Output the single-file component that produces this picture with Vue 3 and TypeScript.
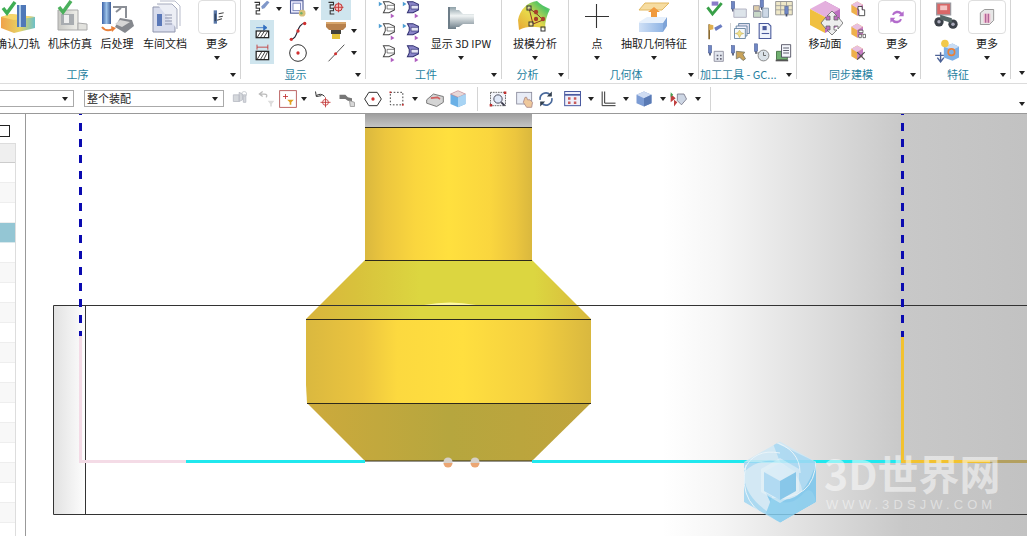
<script setup lang="ts">
import { h } from 'vue'
import type { FunctionalComponent } from 'vue'

const tool = (x: number, y: number, c = '#6f86c4') =>
  `<rect x="${x}" y="${y}" width="4" height="9" fill="${c}" stroke="#47588f" stroke-width=".6"/><path d="M${x + 1} ${y + 9}h2v3h-2z" fill="#46506e"/>`
const pointer = (fill: string, stroke: string, inner: string) =>
  `<path d="M7 4h6l6 3v6l-6 3H7l2-4V8z" fill="${fill}" stroke="${stroke}" stroke-width="1.100"/><path d="M11 8h8v4h-8z" fill="${inner}" stroke="${stroke}" stroke-width=".7"/>`
const tri = '<path d="M2 4l4 2.500-4 2.500z" fill="#4f9ed2"/><path d="M15 17l4 2.500-4 2.500z" fill="#b05fc0"/>'
const triB = '<path d="M15 17l4 2.500-4 2.500z" fill="#b05fc0"/>'

const icons: Record<string, string> = {
  verify: '<defs><linearGradient id="vf" x1="0" x2="1"><stop offset="0" stop-color="#f0a24a"/><stop offset=".55" stop-color="#e6d264"/><stop offset="1" stop-color="#6cc0c8"/></linearGradient></defs><path d="M1 17l10-3 24 3v11l-21 5L1 28z" fill="url(#vf)"/><path d="M1 17l10-3 24 3-21 3z" fill="#f6d66c"/><path d="M17 5h9v22h-9z" fill="#4f78b8"/><path d="M19 5h2v22h-2z" fill="#a8c8e8"/><path d="M3 8l4 5 8-11" fill="none" stroke="#3fae55" stroke-width="3.500"/>',
  machine: '<defs><linearGradient id="mc" x1="0" x2="1"><stop offset="0" stop-color="#c8c8c4"/><stop offset="1" stop-color="#efefea"/></linearGradient></defs><path d="M6 10h20v20H6z" fill="url(#mc)" stroke="#a9a9a9"/><path d="M9 14h13v11H9z" fill="#a8acb0"/><path d="M12 15h5v8h-5z" fill="#eee"/><path d="M26 23l9 1v6H26z" fill="#e2e2de" stroke="#aaa"/><path d="M7 7l4 5 8-11" fill="none" stroke="#4bb05c" stroke-width="3.500"/>',
  post: '<defs><linearGradient id="pt" x1="0" x2="1"><stop offset="0" stop-color="#3d63a8"/><stop offset=".5" stop-color="#9cc2e8"/><stop offset="1" stop-color="#3f5e98"/></linearGradient></defs><path d="M3 2h9v22H3z" fill="url(#pt)"/><path d="M14 7h14M27 7v11M22 8l-5 4" stroke="#8b8f96" stroke-width="2" fill="none"/><path d="M21 18l12 2 2 6-9 7-10-6z" fill="#85888e"/><path d="M21 20l10 2-8 5-7-3z" fill="#d6d6d6"/><path d="M3 27c3 4 7 4 11 2" stroke="#e8803a" stroke-width="2" fill="none"/><path d="M12 26l5 2-4 4z" fill="#e8803a"/>',
  docs: '<path d="M6 7h17l5 5v20H6z" fill="#d8dcec" stroke="#8f95ad"/><path d="M10 4h15l5 5v20" fill="#eceef5" stroke="#a5aabd"/><path d="M13 1h15l5 5v20" fill="none" stroke="#b7bbcb"/><path d="M10 14h5v12h-5z" fill="#5a78b8"/><path d="M18 15h7M18 18h7M18 21h7M18 24h7" stroke="#8f95ad"/>',
  moreTool: '<path d="M8 4h4v16H8z" fill="#5a78a8"/><path d="M9 8h2v9H9z" fill="#33445f"/><path d="M14 8l6-1M14 12l5-1M12 16l6-2" stroke="#444" stroke-width="1.300"/>',
  ipw: '<defs><linearGradient id="ip" x1="0" y1="0" x2="0" y2="1"><stop offset="0" stop-color="#8ea0a8"/><stop offset=".4" stop-color="#f0f4f4"/><stop offset="1" stop-color="#6d7d88"/></linearGradient></defs><path d="M6 7h7v3h3l4 4h11v10H20l-4 3h-3v2H6z" fill="url(#ip)"/><path d="M6 7v22" stroke="#6d7d88" stroke-width="2"/>',
  draft: '<defs><linearGradient id="dr" x1="0" y1="1" x2="1" y2="0"><stop offset="0" stop-color="#e7a534"/><stop offset=".45" stop-color="#e8d84a"/><stop offset=".8" stop-color="#4fc464"/><stop offset="1" stop-color="#9fe0a0"/></linearGradient></defs><path d="M1 20C3 10 10 2 20 1c3 3 8 6 13 8-3 6-5 12-5 20-9-3-18-3-26 1z" fill="url(#dr)"/><path d="M12 8l4 16 10-4-5-5-9-7z" fill="none" stroke="#8b3a2a"/><rect x="10" y="6" width="4" height="4" fill="#fff6" stroke="#333"/><rect x="12" y="22" width="4" height="4" fill="#fff6" stroke="#333"/><rect x="24" y="27" width="4" height="4" fill="#fff6" stroke="#333"/><circle cx="19" cy="12" r="2.200" fill="#a8402a"/><circle cx="26" cy="19" r="2.200" fill="#a8402a"/><circle cx="19" cy="19" r="2.200" fill="#a8402a"/>',
  plus: '<path d="M17.500 4v24M6 16.500h24" stroke="#333" stroke-width="1.100"/>',
  extract: '<defs><linearGradient id="ex" x1="0" x2="1"><stop offset="0" stop-color="#cfe0f6"/><stop offset="1" stop-color="#8fb4e4"/></linearGradient></defs><path d="M9 3h24l-7 7H3z" fill="#f6dca0" stroke="#e2b860"/><path d="M15 18v-6h-3l6-5 6 5h-3v6z" fill="#f09a3e"/><path d="M3 22l8-5h19l-3 6H3z" fill="#e6f0fc"/><path d="M3 23h24v9H3z" fill="url(#ex)"/><path d="M27 23l4-6v9l-4 6z" fill="#7ea4d8"/>',
  move: '<path d="M18 1l15 8v16l-15 8z" fill="#bd6ec0"/><path d="M18 1L3 9l15 8 15-8z" fill="#e4b0de"/><path d="M3 9l15 8v16L3 25z" fill="#f0c040"/><path d="M21 13v4h4v-3l5 6-5 6v-3h-4v4h3l-5 5-5-5h3v-4h-4v3l-5-6 5-6v3h4v-4h-3l5-5 5 5z" fill="#ededed" stroke="#666" stroke-width=".8" transform="translate(6 3)"/>',
  cubeA: '<path d="M4 7l7-4 7 4v9l-7 4-7-4z" fill="#eeb04c"/><path d="M11 3l7 4-7 4-7-4z" fill="#e8c0e0"/><path d="M11 11l7-4v9l-7 4z" fill="#c77cc4"/><path d="M12 9h5v4h3v7h-7v-7h-1z" fill="#fff" stroke="#333"/>',
  cubeB: '<path d="M4 7l7-4 7 4v9l-7 4-7-4z" fill="#eeb04c"/><path d="M11 3l7 4-7 4-7-4z" fill="#e8c0e0"/><path d="M11 11l7-4v9l-7 4z" fill="#c77cc4"/><path d="M13 11h5v3h-5zM13 16h3v4h-3zM18 16h3v4h-3z" fill="#fff" stroke="#333" stroke-width=".8"/>',
  cubeX: '<path d="M4 7l7-4 7 4v9l-7 4-7-4z" fill="#eeb04c"/><path d="M11 3l7 4-7 4-7-4z" fill="#e8c0e0"/><path d="M11 11l7-4v9l-7 4z" fill="#c77cc4"/><path d="M11 11l9 9M20 11l-9 9" stroke="#555" stroke-width="1.500"/>',
  sync: '<path d="M6 9a7 7 0 0 1 12-2l2-2v6h-6l2-2a5 5 0 0 0-8 1zM18 15a7 7 0 0 1-12 2l-2 2v-6h6l-2 2a5 5 0 0 0 8-1z" fill="#b36ccc"/>',
  bino: '<path d="M4 1h12v10H4z" fill="#d86868" stroke="#9a9aa0"/><path d="M7 3h6v4H7z" fill="#f4c4c4"/><circle cx="6" cy="17" r="4" fill="#3b4048"/><circle cx="18" cy="19" r="4" fill="#3b4048"/><circle cx="6" cy="17" r="1.500" fill="#aab"/><circle cx="18" cy="19" r="1.500" fill="#aab"/><path d="M7 11l10 3v4l-10-3z" fill="#566"/>',
  spot: '<path d="M10 9l8-3 6 3v10l-6 3-8-3z" fill="#7eb0e6"/><path d="M10 9l8 3 6-3-6-3z" fill="#c8dcf4"/><circle cx="11" cy="6" r="3.500" fill="#f2c94a"/><circle cx="17" cy="14" r="3" fill="none" stroke="#e8803a" stroke-width="1.500"/><path d="M7 14v8M4 19l3 4 3-4M2 17h8" stroke="#4c6296" stroke-width="1.300" fill="none"/>',
  box3: '<path d="M4 7l5-4h11v13l-5 5H4z" fill="#e7e7e7" stroke="#888"/><path d="M8 8h8v11H8z" fill="#efb7cc"/><path d="M10 8h1v11h-1zM13 8h1v11h-1z" fill="#8d3f80"/>',
  sel1: '<path d="M3 4h6v3H5v4h4v3H5v4h5" fill="none" stroke="#333" stroke-width="1.300"/><path d="M11 9l7-7 3 2-6 7-3 1z" fill="#7f97c9"/>',
  sel2: '<rect x="3" y="2" width="15" height="15" fill="#eef" stroke="#4d5a94" stroke-width="1.300"/><rect x="6" y="5" width="9" height="9" fill="#fff" stroke="#6d7ab4"/><circle cx="17" cy="17" r="4" fill="#d9c27a"/><circle cx="16" cy="17" r="1.500" fill="#6db06d"/>',
  sel3: '<path d="M3 4h6v3H5v4h4v3H5v4h5" fill="none" stroke="#333" stroke-width="1.300"/><circle cx="15" cy="10" r="4.500" fill="#f2bcbc" stroke="#c03030" stroke-width="1.200"/><path d="M15 4v12M9 10h12" stroke="#c03030"/>',
  hatch: '<path d="M5 8h12M14 5l4 3-4 3z" stroke="#3270c0" fill="#3270c0"/><rect x="5" y="12" width="15" height="8" fill="#fff" stroke="#222" stroke-width="1.500"/><path d="M6 20l5-8M10 20l5-8M14 20l5-8" stroke="#222"/>',
  hatch2: '<path d="M6 5h13M6 2v6M19 2v6" stroke="#c03030" fill="none"/><rect x="5" y="10" width="15" height="10" fill="#fff" stroke="#222" stroke-width="1.500"/><path d="M6 20l6-10M10 20l6-10M14 20l5-10" stroke="#222"/>',
  curve: '<path d="M3 22c10 0 6-18 18-20" fill="none" stroke="#223" stroke-width="1.300"/><circle cx="4" cy="22" r="2" fill="#d03030"/><circle cx="12" cy="12" r="2" fill="#d03030"/><circle cx="20" cy="3" r="2" fill="#d03030"/>',
  circle: '<circle cx="12" cy="12" r="10" fill="#fff" stroke="#333" stroke-width="1.200"/><circle cx="12" cy="12" r="2" fill="#d03030"/>',
  bronze: '<path d="M2 3h20v5l-3 3H5L2 8z" fill="#b8814c"/><path d="M2 3h20v2H2z" fill="#d8a66c"/><path d="M7 11h10v4H7z" fill="#42413a"/><path d="M8 15h8v5H8z" fill="#e4c23a"/>',
  line: '<path d="M3 22L22 2" stroke="#333"/><circle cx="11.500" cy="13" r="1.800" fill="#d03030"/>',
  t1: pointer('#fff', '#444', '#fff') + tri,
  t2: pointer('#8a85c8', '#2f2f70', '#e4e4f4') + tri,
  t3: pointer('#fff', '#444', '#fff') + triB,
  t4: pointer('#8a85c8', '#2f2f70', '#e4e4f4') + triB,
  chk: '<path d="M8 3h8v5H8z" fill="#8a7cc8"/><path d="M3 10l6 8L20 5" fill="none" stroke="#38a048" stroke-width="3.500"/>',
  a2: tool(4, 3) + '<path d="M7 12h15v10H7z" fill="#dde4ea" stroke="#aab"/>',
  a3: tool(11, 1) + '<path d="M3 8h7v6H3z" fill="#dca" stroke="#889"/><path d="M14 11h7v11h-7z" fill="#cdd8e6" stroke="#89a"/><path d="M3 15h9v7H3z" fill="#c8d8c8" stroke="#889"/>',
  a4: '<path d="M2 3h20v16H2z" fill="#efe8c8" stroke="#888"/><path d="M2 8h20M2 13h20M8 3v16M15 3v16" stroke="#999"/>' + tool(13, 9),
  b1: '<path d="M5 4v18" stroke="#8a6a30" stroke-width="2"/><path d="M5 4l5 1v5l-5 1z" fill="#e0b050"/><path d="M11 8l8-4 2 3-8 5z" fill="#6a7cc0"/>',
  b2: '<path d="M8 3h13v12H8z" fill="#dde" stroke="#5a7a98"/><path d="M5 6h13v12H5z" fill="#f4f4ff" stroke="#5a7a98"/><path d="M3 9h13v12H3z" fill="#f6fafc" stroke="#5a7a98"/><path d="M9 11l2 3 3 1-3 1-2 4-2-4-3-1 3-1z" fill="#efe08a" stroke="#b59a30" stroke-width=".5"/>',
  b3: '<path d="M5 3h11l3 3v15H5z" fill="#f0f4fc" stroke="#4a5a9c" stroke-width="1.300"/><path d="M9 6h5v5H9z" fill="#4a5a9c"/><path d="M8 15h9" stroke="#4a5a9c" stroke-width="1.300"/>',
  c1: tool(4, 3) + '<path d="M11 10h11v12H11z" fill="#e2e6ee" stroke="#889"/><path d="M14 14h2v2h-2zM18 14h2v2h-2zM14 18h2v2h-2zM18 18h2v2h-2z" fill="#667"/>',
  c2: tool(4, 3) + '<path d="M10 10l10 1-2 3 3 5-3 2-4-4-4 2z" fill="#c9a35a" stroke="#776"/>',
  c3: tool(4, 1) + '<path d="M5 12h8" stroke="#777"/><circle cx="15" cy="15" r="6.500" fill="#dbe2e8" stroke="#777"/><path d="M15 11v4h3" stroke="#555" fill="none"/>',
  c4: '<path d="M3 10h13v10H3z" fill="#70b070" stroke="#3a6a3a"/><path d="M9 2h11v15H9z" fill="#f4f6fc" stroke="#445"/><path d="M11 6h7M11 9h7M11 12h7" stroke="#445"/><path d="M2 20h15v2H2z" fill="#555"/>',
  gPlane: '<path d="M4 7h7v8H4zM11 4l4 2v7l-4 2zM16 7h3v9h-3z" fill="#d5d8dc" stroke="#b8bcc4"/><circle cx="17" cy="6" r="3" fill="none" stroke="#c4c8cc"/>',
  gFilter: '<path d="M4 6h6c3 0 4 2 2 4M8 3L4 6l4 3" fill="none" stroke="#bbb" stroke-width="1.500"/><path d="M14 14h8l-3 4v3h-2v-3z" fill="#ddd"/>',
  filter: '<rect x="2" y="2" width="20" height="20" fill="#fff" stroke="#b04848"/><path d="M9 6v6M6 9h6" stroke="#c03030"/><path d="M11 13h8l-3 3v3h-2v-3z" fill="#e0a020"/>',
  undoX: '<path d="M4 8a7 7 0 0 1 10 1M3 3l1 6 6-1" fill="none" stroke="#333" stroke-width="1.200"/><path d="M15 10v12M9 16h12" stroke="#c03030"/><circle cx="15" cy="16" r="3.500" fill="none" stroke="#c03030"/>',
  wrench: '<path d="M3 7h7l3 3 5 1v4l-5-1-3-2H3z" fill="#777"/><path d="M15 14l6 2v5h-5z" fill="#d8d8d8" stroke="#999"/>',
  hex: '<path d="M7 4h10l5 8-5 8H7l-5-8z" fill="#fff" stroke="#333" stroke-width="1.200"/><circle cx="12" cy="12" r="2" fill="#d03030"/>',
  dash: '<rect x="4" y="4" width="15" height="15" fill="none" stroke="#222" stroke-dasharray="2 2"/><rect x="3" y="3" width="2" height="2" fill="#c03030"/><rect x="18" y="18" width="2" height="2" fill="#c03030"/>',
  eraser: '<path d="M2 13l8-7 12 3v7l-8 5-12-4z" fill="#d4d4d4" stroke="#666"/><path d="M7 11l8-1 3 2" stroke="#d06060" stroke-width="2" fill="none"/>',
  cube: '<path d="M12 2l9 4v12l-9 4-9-4V6z" fill="#6ab0e6"/><path d="M12 2l9 4-9 4-9-4z" fill="#e8d8d8" stroke="#d06060" stroke-width=".5"/><path d="M12 10l9-4v12l-9 4z" fill="#a8d4f4"/>',
  zoomBox: '<rect x="3" y="4" width="18" height="16" fill="#f2f4fa" stroke="#555" stroke-dasharray="2 1"/><circle cx="12" cy="12" r="5" fill="#dfe8f8" stroke="#334"/><path d="M16 16l4 4" stroke="#334" stroke-width="2"/><rect x="2" y="18" width="3" height="3" fill="#c03030"/><rect x="19" y="3" width="3" height="3" fill="#c03030"/>',
  hand: '<rect x="2" y="4" width="18" height="14" fill="#e8ecf6" stroke="#889"/><path d="M12 10l2 0 1 3 3 0 3 3-1 6h-6l-4-6z" fill="#eec89c" stroke="#a88"/>',
  rotate: '<path d="M5 13a7 7 0 0 1 12-6M19 11a7 7 0 0 1-12 6" fill="none" stroke="#4a6a9c" stroke-width="2"/><path d="M19 3v6h-6zM5 21v-6h6z" fill="#33404f"/>',
  views: '<rect x="2" y="3" width="19" height="17" fill="#efeffa" stroke="#4a5aa0" stroke-width="1.200"/><path d="M2 7h19" stroke="#4a5aa0" stroke-width="2"/><path d="M6 10h3v3H6zM13 10h3v3h-3zM6 15h3v3H6zM13 15h3v3h-3z" fill="#c85a5a"/>',
  wcs: '<path d="M5 3v17h16M8 3v14h13" fill="none" stroke="#333" stroke-width="1.200"/>',
  box: '<path d="M12 3l9 4v10l-9 4-9-4V7z" fill="#7c9cd4"/><path d="M12 3l9 4-9 4-9-4z" fill="#cfdcf2"/><path d="M12 11l9-4v10l-9 4z" fill="#5a7ab4"/>',
  mark: '<path d="M10 6l8 0 3 6-6 7-5-5z" fill="#cdd6e4" stroke="#778"/><path d="M2 6l6 5-6 5zM6 13l4 3-4 5z" fill="#c04040"/><path d="M2 4l3 3-3 3z" fill="#40a050"/>'
}

const Ic: FunctionalComponent<{ n: string; s?: number }> = (p) => {
  const s = p.s ?? 20
  const v = s >= 30 ? s : 24
  return h('svg', { class: 'ic', width: s, height: s, viewBox: `0 0 ${v} ${v}`, innerHTML: icons[p.n] })
}

interface TbItem { n: string; c: number; arrow?: boolean; sep?: boolean }
const barItems: TbItem[] = [
  { n: 'gPlane', c: 240 }, { n: 'gFilter', c: 266 }, { n: 'filter', c: 288 }, { n: '', c: 304, arrow: true },
  { n: 'undoX', c: 324 }, { n: 'wrench', c: 348 }, { n: 'hex', c: 374 }, { n: 'dash', c: 398 }, { n: '', c: 416, arrow: true },
  { n: 'eraser', c: 437 }, { n: 'cube', c: 460 }, { n: '', c: 479, sep: true },
  { n: 'zoomBox', c: 500 }, { n: 'hand', c: 527 }, { n: 'rotate', c: 548 }, { n: 'views', c: 575 }, { n: '', c: 593, arrow: true },
  { n: 'wcs', c: 611 }, { n: '', c: 629, arrow: true }, { n: 'box', c: 648 }, { n: '', c: 667, arrow: true },
  { n: 'mark', c: 684 }, { n: '', c: 703, arrow: true }, { n: '', c: 716, sep: true }
]
const itemWidth = (i: TbItem) => (i.arrow ? 7 : i.sep ? 1 : 20)
const barStart = 224
const barOffset = (idx: number) => {
  const it = barItems[idx]
  const prev = idx === 0 ? barStart : barItems[idx - 1].c + itemWidth(barItems[idx - 1]) / 2
  return `${it.c - itemWidth(it) / 2 - prev}px`
}

const rows = Array.from({ length: 19 }, (_, i) => i)
const rowClass = (i: number) => ({ alt: i % 2 === 1, sel: i === 3 })
</script>

<template>
  <div class="app">
    <div class="ribbon">
      <section class="group g-seq">
        <div class="tools">
          <div class="big w52"><Ic n="verify" :s="36" /><span>确认刀轨</span></div>
          <div class="big w52"><Ic n="machine" :s="36" /><span>机床仿真</span></div>
          <div class="big w42"><Ic n="post" :s="36" /><span>后处理</span></div>
          <div class="big w54"><Ic n="docs" :s="36" /><span>车间文档</span></div>
          <div class="big more seq-more"><div class="morebox"><Ic n="moreTool" /></div><span>更多</span><i class="arr"></i></div>
        </div>
        <footer><b>工序</b><i class="arr"></i></footer>
      </section>

      <section class="group g-show">
        <div class="tools grid show-grid">
          <Ic n="sel1" /><i class="arr"></i><Ic n="sel2" /><i class="arr"></i><div class="on"><Ic n="sel3" /></div><span></span>
          <div class="on"><Ic n="hatch" /></div><span></span><Ic n="curve" /><span></span><Ic n="bronze" :s="24" /><i class="arr"></i>
          <div class="on"><Ic n="hatch2" /></div><span></span><Ic n="circle" /><span></span><Ic n="line" /><i class="arr"></i>
        </div>
        <footer><b>显示</b><i class="arr"></i></footer>
      </section>

      <section class="group g-work">
        <div class="tools">
          <div class="grid work-grid">
            <Ic n="t1" :s="22" /><Ic n="t2" :s="22" /><Ic n="t1" :s="22" /><Ic n="t2" :s="22" /><Ic n="t3" :s="22" /><Ic n="t4" :s="22" />
          </div>
          <div class="big ipw-btn"><Ic n="ipw" :s="36" /><span>显示 3D IPW</span><i class="arr"></i></div>
        </div>
        <footer><b>工件</b><i class="arr"></i></footer>
      </section>

      <section class="group g-ana">
        <div class="tools">
          <div class="big w66"><Ic n="draft" :s="36" /><span>拔模分析</span><i class="arr"></i></div>
        </div>
        <footer><b>分析</b><i class="arr"></i></footer>
      </section>

      <section class="group g-geo">
        <div class="tools">
          <div class="big geo-pt"><Ic n="plus" :s="36" /><span>点</span><i class="arr"></i></div>
          <div class="big w70 geo-ex"><Ic n="extract" :s="36" /><span>抽取几何特征</span><i class="arr"></i></div>
        </div>
        <footer><b>几何体</b><i class="arr"></i></footer>
      </section>

      <section class="group g-mach">
        <div class="tools grid mach-grid">
          <Ic n="chk" /><Ic n="a2" /><Ic n="a3" /><Ic n="a4" />
          <Ic n="b1" /><Ic n="b2" class="nudge" /><Ic n="b3" class="nudge" /><span></span>
          <Ic n="c1" /><Ic n="c2" /><Ic n="c3" /><Ic n="c4" />
          <i class="vsep"></i>
        </div>
        <footer><b>加工工具 - GC...</b><i class="arr"></i></footer>
      </section>

      <section class="group g-sync">
        <div class="tools">
          <div class="big w42 move-btn"><Ic n="move" :s="36" /><span>移动面</span></div>
          <div class="grid col-grid"><Ic n="cubeA" /><Ic n="cubeB" /><Ic n="cubeX" /></div>
          <div class="big more"><div class="morebox"><Ic n="sync" /></div><span>更多</span><i class="arr"></i></div>
        </div>
        <footer><b>同步建模</b><i class="arr"></i></footer>
      </section>

      <section class="group g-feat">
        <div class="tools">
          <div class="feat-col"><Ic n="bino" :s="28" /><Ic n="spot" :s="26" /></div>
          <div class="big more"><div class="morebox"><Ic n="box3" /></div><span>更多</span><i class="arr"></i></div>
        </div>
        <footer><b>特征</b><i class="arr"></i></footer>
      </section>

      <div class="tail"><i class="arr"></i></div>
    </div>

    <div class="toolbar">
      <div class="combo c1"><span></span><i class="arr"></i></div>
      <div class="combo c2"><span>整个装配</span><i class="arr"></i></div>
      <template v-for="(it, idx) in barItems" :key="idx">
        <i v-if="it.arrow" class="arr bar-arr" :style="{ marginLeft: barOffset(idx) }"></i>
        <i v-else-if="it.sep" class="bar-sep" :style="{ marginLeft: barOffset(idx) }"></i>
        <Ic v-else :n="it.n" :style="{ marginLeft: barOffset(idx) }" />
      </template>
      <i class="arr bar-end"></i>
    </div>

    <div class="main">
      <aside class="side">
        <div class="side-top"><i class="check"></i></div>
        <div class="list">
          <div class="head"></div>
          <div v-for="i in rows" :key="i" class="row" :class="rowClass(i)"></div>
        </div>
      </aside>
      <svg class="view" width="1001" height="422" viewBox="26 114 1001 422">
        <defs>
          <linearGradient id="bg" x1="0" x2="1027" y1="0" y2="0" gradientUnits="userSpaceOnUse">
            <stop offset=".645" stop-color="#fff" />
            <stop offset=".7" stop-color="#f6f6f6" />
            <stop offset=".88" stop-color="#c8c8c8" />
            <stop offset="1" stop-color="#c2c2c2" />
          </linearGradient>
          <linearGradient id="strip" x1="0" x2="1">
            <stop offset="0" stop-color="#e2e2e2" />
            <stop offset="1" stop-color="#fdfdfd" />
          </linearGradient>
          <linearGradient id="shank" x1="0" x2="1">
            <stop offset="0" stop-color="#dab83e" />
            <stop offset=".12" stop-color="#ecc63e" />
            <stop offset=".3" stop-color="#fad63e" />
            <stop offset=".5" stop-color="#ffe03e" />
            <stop offset=".75" stop-color="#fad63e" />
            <stop offset=".9" stop-color="#ecc63e" />
            <stop offset="1" stop-color="#dab83e" />
          </linearGradient>
          <linearGradient id="mid" x1="0" x2="1">
            <stop offset="0" stop-color="#dab83f" />
            <stop offset=".2" stop-color="#ecc53f" />
            <stop offset=".32" stop-color="#fcd93f" />
            <stop offset=".55" stop-color="#ffdf3f" />
            <stop offset=".8" stop-color="#f4cf3f" />
            <stop offset="1" stop-color="#d9b83f" />
          </linearGradient>
          <linearGradient id="upper" x1="0" x2="1">
            <stop offset="0" stop-color="#d9b43c" />
            <stop offset=".18" stop-color="#d8c23c" />
            <stop offset=".4" stop-color="#dcd640" />
            <stop offset=".8" stop-color="#dcd640" />
            <stop offset="1" stop-color="#d8b83c" />
          </linearGradient>
          <linearGradient id="lower" x1="0" x2="1">
            <stop offset="0" stop-color="#cdaa3c" />
            <stop offset=".5" stop-color="#b6a63e" />
            <stop offset="1" stop-color="#c0a43c" />
          </linearGradient>
          <linearGradient id="cap" x1="0" x2="0" y1="0" y2="1">
            <stop offset="0" stop-color="#9c9c9c" />
            <stop offset="1" stop-color="#c4c4c4" />
          </linearGradient>
          <clipPath id="hexClip"><path d="M780 441.500l36 20.500v40l-36 20.500-36-20.500v-40z" /></clipPath>
        </defs>

        <rect x="26" y="114" width="1001" height="422" fill="url(#bg)" />
        <rect x="54" y="306" width="31" height="208" fill="url(#strip)" />

        <rect x="365" y="113" width="167" height="14" fill="url(#cap)" />
        <rect x="365" y="127" width="167" height="133" fill="url(#shank)" />
        <path d="M365 260h167l59 59H306z" fill="url(#upper)" />
        <path d="M306 319h285v84H307l-1-18z" fill="url(#mid)" />
        <path d="M307 403h284l-59 58H365z" fill="url(#lower)" />
        <path d="M424 305q26-5 52 0z" fill="#fff7a0" />

        <path d="M53.500 305.500H1027M53.500 305.500v209H1027M85.500 305.500v209" fill="none" stroke="#333" />
        <path d="M365 127.500h167M365 260.500h167M306 319.500h285M307 403.500h284M365 461h167" fill="none" stroke="#2e2a1c" />

        <path d="M80.500 114V337" fill="none" stroke="#0a0ab0" stroke-width="3" stroke-dasharray="8 8" stroke-dashoffset="-9" />
        <path d="M902.500 114V337" fill="none" stroke="#0a0ab0" stroke-width="3" stroke-dasharray="8 8" stroke-dashoffset="-9" />
        <path d="M80.500 336V461.500H186" fill="none" stroke="#f4dbe6" stroke-width="3" />
        <path d="M186 461.500H365M532 461.500H902" fill="none" stroke="#20e8ee" stroke-width="3" />
        <path d="M902.500 337V461.500H990" fill="none" stroke="#f2c230" stroke-width="3" />
        <path d="M990 461.500H1027" fill="none" stroke="#b3a060" stroke-width="3" />

        <circle cx="448" cy="462" r="4.500" fill="#d6d0c8" />
        <path d="M443.500 463a4.500 4.500 0 0 0 9 0z" fill="#eba673" />
        <circle cx="475" cy="462" r="4.500" fill="#d6d0c8" />
        <path d="M470.500 463a4.500 4.500 0 0 0 9 0z" fill="#eba673" />

        <g opacity=".85">
          <g clip-path="url(#hexClip)">
            <rect x="744" y="441" width="72" height="82" fill="#cfe8f6" />
            <path d="M744 462h36l-8-21 44 21v40h-14q4-25-22-40-20-5-36 10z" fill="#a6d8f4" />
            <path d="M816 462v40l-36 21-14-30q22 14 36-2 10-12 14-29z" fill="#78c6ee" />
            <path d="M744 470q-2 24 24 42l12 11-36-21z" fill="#a0d6f2" />
            <path d="M772 497q16 12 30-2 10-12 14 7l-36 21-14-10z" fill="#84cdf0" />
            <path d="M772 441q28 8 28 32M816 461q-2 40-44 36M780 523q-44-16-34-58M744 470q10-22 36-17" fill="none" stroke="#eaf6fc" stroke-width="1" />
          </g>
          <path d="M780 458l19 11v23l-19 11-19-11v-23z" fill="#e8f5fb" fill-opacity=".6" />
          <path d="M780 463l16 9-16 9-16-9z" fill="#d8eefa" />
          <path d="M764 472l16 9v19l-16-9z" fill="#a8d8f4" />
          <path d="M796 472l-16 9v19l16-9z" fill="#78c2ea" />
        </g>
        <text class="wm" x="824" y="490">3D世界网</text>
        <text class="wm-sub" x="826" y="509">WWW.3DSJW.COM</text>
      </svg>
    </div>
  </div>
</template>

<style>
html, body { margin: 0; padding: 0; background: #fff; overflow: hidden; }
</style>

<style scoped>
.app {
  width: 1027px;
  height: 536px;
  overflow: hidden;
  display: flex;
  flex-direction: column;
  background: #fff;
  font-family: "Noto Sans CJK SC", "Liberation Sans", sans-serif;
  font-size: 11px;
  color: #222;
}
.ic { display: block; flex: none; }
.arr {
  display: block;
  flex: none;
  width: 0;
  height: 0;
  border-left: 3.5px solid transparent;
  border-right: 3.5px solid transparent;
  border-top: 4px solid #222;
}

/* ribbon */
.ribbon {
  display: flex;
  height: 83px;
  flex: none;
  border-bottom: 1px solid #dcdcdc;
}
.group {
  flex: none;
  height: 79px;
  box-sizing: border-box;
  border-right: 1px solid #d4d4d4;
  display: flex;
  flex-direction: column;
}
.tools { height: 67px; flex: none; display: flex; }
footer {
  height: 12px;
  display: flex;
  align-items: flex-start;
  line-height: 15px;
  color: #1f7f9f;
}
footer b {
  font-weight: 400;
  flex: 1;
  min-width: 0;
  text-align: center;
  white-space: nowrap;
}
footer .arr { margin: 6px 4px 0 5px; }

.big {
  display: flex;
  flex-direction: column;
  align-items: center;
  flex: none;
  position: relative;
  white-space: nowrap;
}
.big span { line-height: 15px; }
.big .arr { margin-top: 5px; }
.w42 { width: 42px; }
.w52 { width: 52px; }
.w54 { width: 54px; }
.w66 { width: 66px; }
.w70 { width: 70px; }
.more { width: 38px; }
.morebox {
  width: 38px;
  height: 34px;
  margin-bottom: 2px;
  border: 1px solid #dedede;
  border-radius: 4px;
  display: flex;
  align-items: center;
  justify-content: center;
  box-sizing: border-box;
}
.seq-more { margin-left: 6px; }

.grid { display: grid; place-items: center; }

.g-seq { width: 311px; margin-left: -70px; }
.g-seq .tools { padding-left: 62px; }
.g-show { width: 125px; }
.show-grid {
  margin-top: -2px;
  height: 69px;
  padding-left: 9px;
  grid-template-columns: 24px 10px 27px 10px 30px 6px;
  grid-auto-rows: 22px;
  align-content: start;
}
.on {
  width: 100%;
  height: 100%;
  background: #cfe5ee;
  display: flex;
  align-items: center;
  justify-content: center;
}
.g-work { width: 136px; }
.work-grid {
  grid-template-columns: 24px 24px;
  grid-auto-rows: 22px;
  align-content: start;
  margin-top: -2px;
  height: 69px;
  margin-left: 10px;
}
.ipw-btn { width: 74px; }
.g-ana { width: 67px; }
.g-geo { width: 130px; }
.geo-pt { width: 56px; }
.geo-ex { margin-left: -6px; }
.g-mach { width: 98px; position: relative; }
.mach-grid {
  position: relative;
  margin-top: -2px;
  height: 69px;
  padding-left: 4px;
  grid-template-columns: 23px 23px 23px 23px;
  grid-auto-rows: 22px;
  align-content: start;
}
.nudge { margin-left: 8px; }
.vsep {
  position: absolute;
  left: 31px;
  top: 25px;
  width: 1px;
  height: 17px;
  background: #d4d4d4;
}
.g-mach footer b { text-align: left; padding-left: 1px; }
.g-sync { width: 124px; }
.move-btn { margin-left: 7px; }
.col-grid {
  grid-auto-rows: 22px;
  align-content: start;
  margin: -2px 4px 0 -4px;
  width: 32px;
  height: 69px;
}
.g-feat { width: 90px; }
.feat-col {
  width: 47px;
  padding-left: 3px;
  box-sizing: border-box;
  display: flex;
  flex-direction: column;
  align-items: center;
  gap: 7px;
  padding-top: 2px;
}
.tail { flex: 1; display: flex; justify-content: flex-end; align-items: flex-start; padding: 71px 2px 0 0; }

/* toolbar */
.toolbar {
  height: 30px;
  flex: none;
  display: flex;
  align-items: center;
  position: relative;
  border-bottom: 1px solid #999;
  box-sizing: border-box;
}
.combo {
  height: 17px;
  box-sizing: border-box;
  border: 1px solid #aaa;
  display: flex;
  align-items: center;
  justify-content: space-between;
  padding: 0 5px 0 2px;
  flex: none;
}
.combo span { line-height: 15px; color: #222; }
.c1 { width: 76px; margin-left: -2px; }
.c2 { width: 140px; margin-left: 10px; }
.bar-sep { display: block; flex: none; width: 1px; height: 24px; background: #d4d4d4; }
.bar-end { position: absolute; right: 2px; top: 18px; }

/* side and canvas */
.main { flex: 1; display: flex; min-height: 0; }
.side {
  width: 25px;
  flex: none;
  border-right: 1px solid #999;
  box-sizing: content-box;
  overflow: hidden;
}
.side-top { height: 29px; display: flex; align-items: center; }
.check {
  display: block;
  width: 9px;
  height: 10px;
  margin-left: -1px;
  margin-top: 5px;
  border: 1px solid #222;
}
.list {
  width: 16px;
  border-right: 1px solid #ddd;
  border-top: 1px solid #ddd;
  box-sizing: border-box;
}
.head { height: 18px; background: #efefef; border-bottom: 1px solid #ccc; }
.row { height: 19px; background: #fff; border-bottom: 1px solid #eee; }
.row.alt { background: #f8f8f8; }
.row.sel { background: #94c6d4; border-bottom-color: #d8e8ec; }
.view { display: block; flex: none; }
.wm {
  font-family: "Noto Sans CJK SC", "Liberation Sans", sans-serif;
  font-size: 41px;
  font-weight: 700;
  fill: #fff;
  fill-opacity: .5;
}
.wm-sub {
  font-family: "Liberation Sans", sans-serif;
  font-size: 13px;
  letter-spacing: 4.100px;
  fill: #fff;
  fill-opacity: .45;
}
</style>
